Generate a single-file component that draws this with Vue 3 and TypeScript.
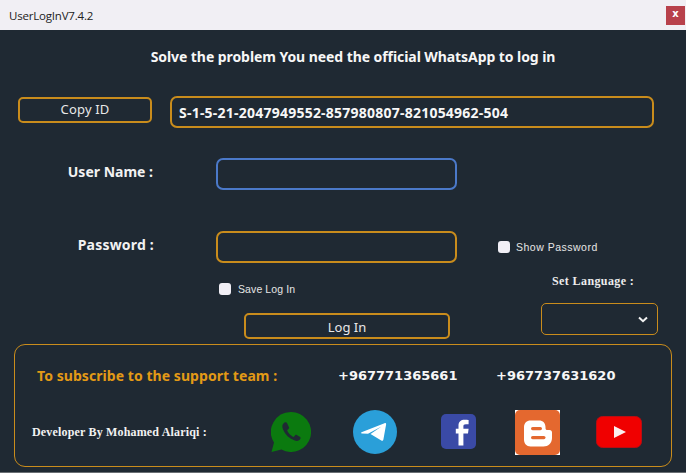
<script setup lang="ts">
import { ref } from 'vue'

const userName = ref('')
const password = ref('')
const showPassword = ref(false)
const saveLogIn = ref(false)
const machineId = 'S-1-5-21-2047949552-857980807-821054962-504'
</script>

<template>
  <div class="window">
    <header class="titlebar">
      <span class="title">UserLogInV7.4.2</span>
      <button class="close">x</button>
    </header>

    <h1 class="heading">Solve the problem You need the official WhatsApp to log in</h1>

    <div class="id-row">
      <button class="copy-btn">Copy ID</button>
      <div class="id-box">{{ machineId }}</div>
    </div>

    <div class="field-row user-row">
      <label class="field-label">User Name :</label>
      <input v-model="userName" class="field focus" type="text" />
    </div>

    <div class="field-row pass-row">
      <label class="field-label">Password :</label>
      <input v-model="password" class="field" :type="showPassword ? 'text' : 'password'" />
      <label class="check show-check">
        <input v-model="showPassword" type="checkbox" />
        <span>Show Password</span>
      </label>
    </div>

    <div class="lower-row">
      <div class="lower-left">
        <label class="check save-check">
          <input v-model="saveLogIn" type="checkbox" />
          <span>Save Log In</span>
        </label>
        <button class="login-btn">Log In</button>
      </div>
      <div class="lower-right">
        <div class="lang-label">Set Language :</div>
        <div class="lang-select">
          <svg class="chevron" width="10" height="7" viewBox="0 0 10 7">
            <path d="M1 1.5 L5 5.2 L9 1.5" fill="none" stroke="#f2f2f2" stroke-width="2" />
          </svg>
        </div>
      </div>
    </div>

    <footer class="support">
      <div class="support-top">
        <span class="subscribe">To subscribe to the support team :</span>
        <span class="phone first">+967771365661</span>
        <span class="phone second">+967737631620</span>
      </div>
      <div class="support-bottom">
        <span class="developer">Developer By Mohamed Alariqi :</span>

        <svg class="ic whatsapp" width="40" height="40" viewBox="0 0 40 40">
          <path d="M20 0 A20 20 0 1 1 10.4 37.5 L0.5 40 L3 30.6 A20 20 0 0 1 20 0 Z" fill="#0b7a0f" />
          <path transform="translate(2.5 3.4) scale(0.86)" d="M12.5 8.5 C10 10 9.6 13 11.2 16.6 C13.8 22.4 18 26.6 24 29 C27.4 30.3 30.3 29.6 31.4 27 C31.7 26.2 31.6 25.6 31 25.2 L27 22.8 C26.3 22.4 25.7 22.5 25.2 23.1 L24 24.6 C23.6 25 23.1 25.1 22.6 24.8 C19.8 23.2 17.6 21 16.2 18.2 C15.9 17.6 16 17.2 16.4 16.8 L17.7 15.5 C18.2 15 18.3 14.4 18 13.8 L16 9.3 C15.5 8.2 14 7.7 12.5 8.5 Z" fill="#1f2a33" />
        </svg>

        <svg class="ic telegram" width="44" height="44" viewBox="0 0 44 44">
          <circle cx="22" cy="22" r="22" fill="#2a9fd9" />
          <path d="M8.5 22.3 L31.5 13.2 C32.6 12.8 33.3 13.4 33.1 14.5 L30.4 29.6 C30.1 30.8 29.2 31.2 28.3 30.5 L17.5 24 L28.5 16.4 L15 23.8 L8.7 23.4 C8 23.3 8 22.6 8.5 22.3 Z" fill="#fff" />
        </svg>

        <svg class="ic facebook" width="35" height="35" viewBox="0 0 35 35">
          <rect width="35" height="35" rx="5" fill="#3a4aa6" />
          <path d="M17.5 31.5 V19.5 H14.8 V14.8 H17.5 V11.6 C17.5 7.8 20 5.8 23.6 5.8 C25.4 5.8 27 5.9 27.6 6 V10.2 H25 C22.8 10.2 22.4 11 22.4 12.2 V14.8 H27.6 L27 19.5 H22.4 V31.5 Z" fill="#fff" />
        </svg>

        <svg class="ic blogger" width="45" height="45" viewBox="0 0 45 45">
          <rect width="45" height="45" fill="#fff" />
          <rect width="45" height="45" rx="5" fill="#e4682f" />
          <path d="M15.5 10.5 H24 C28 10.5 30.5 13.2 30.5 17 V18 C30.5 19.4 31.2 20 32.4 20 H34.5 C36.2 20 37 21 37 22.5 V28 C37 33 33.2 36.5 28.5 36.5 H15.5 C11.5 36.5 9 33.5 9 29.5 V17 C9 13.2 11.8 10.5 15.5 10.5 Z" fill="#fff" />
          <rect x="16" y="17" width="11" height="3.2" rx="1.6" fill="#e4682f" />
          <rect x="16" y="26" width="14.5" height="3.2" rx="1.6" fill="#e4682f" />
        </svg>

        <svg class="ic youtube" width="46" height="32" viewBox="0 0 46 32">
          <rect x="0.5" y="0.5" width="45" height="31" rx="6" fill="#f00000" stroke="#b90d12" />
          <path d="M18 10 L30 16 L18 22 Z" fill="#fbeeee" />
        </svg>
      </div>
    </footer>
  </div>
</template>

<style scoped>
.window {
  width: 686px;
  height: 473px;
  overflow: hidden;
  background: #1f2933;
  color: #f4f4f4;
  font-family: "Noto Sans", sans-serif;
  border-bottom: 1px solid #6a6f74;
  box-sizing: border-box;
}

.titlebar {
  height: 30px;
  background: #f1eff4;
  display: flex;
  align-items: center;
  justify-content: space-between;
  padding: 0 1px 0 9px;
  box-sizing: border-box;
}

.title {
  font-family: "Open Sans", sans-serif;
  font-size: 11.5px;
  letter-spacing: -0.2px;
  color: #222;
}

.close {
  width: 19px;
  height: 19px;
  border: none;
  padding: 0 0 2px;
  background: #b8414b;
  color: #fff;
  font-family: "DejaVu Sans", sans-serif;
  font-size: 10px;
  font-weight: 700;
  line-height: 1;
}

.heading {
  height: 54px;
  margin: 0;
  padding: 0 0 2px 20px;
  box-sizing: border-box;
  display: flex;
  align-items: center;
  justify-content: center;
  font-size: 14px;
  font-weight: 700;
  letter-spacing: -0.07px;
  color: #f7f7f7;
}

.id-row {
  display: flex;
  gap: 18px;
  margin-top: 12px;
  padding-left: 18px;
}

.copy-btn {
  width: 134px;
  height: 26px;
  margin-top: 1px;
  background: transparent;
  border: 2px solid #c98c1c;
  border-radius: 5px;
  color: #e8e8e8;
  font-family: "Noto Sans", sans-serif;
  font-size: 13px;
  letter-spacing: 0.15px;
  padding: 0 0 3px;
}

.id-box {
  width: 484px;
  height: 32px;
  box-sizing: border-box;
  border: 2px solid #c98c1c;
  border-radius: 7px;
  padding-left: 7px;
  display: flex;
  align-items: center;
  font-size: 14px;
  font-weight: 700;
  letter-spacing: 0.23px;
  color: #f7f7f7;
}

.field-row {
  display: flex;
  align-items: center;
  height: 32px;
}

.user-row {
  margin-top: 30px;
}

.pass-row {
  margin-top: 41px;
}

.field-label {
  width: 154px;
  margin-right: 62px;
  text-align: right;
  font-size: 14px;
  font-weight: 700;
  color: #f2f2f2;
}

.user-row .field-label {
  width: 153px;
  margin-right: 63px;
  padding-bottom: 5px;
}

.pass-row .field-label {
  padding-bottom: 6px;
  letter-spacing: 0.2px;
}

.field {
  width: 241px;
  height: 32px;
  box-sizing: border-box;
  background: transparent;
  border: 2px solid #c98c1c;
  border-radius: 7px;
  outline: none;
  color: #f4f4f4;
}

.field.focus {
  border-color: #4b79c9;
}

.check {
  display: flex;
  align-items: center;
  font-family: "Liberation Sans", sans-serif;
  font-size: 10.5px;
  color: #e6e6e6;
}

.check input {
  appearance: none;
  margin: 0;
  background: #f1eff6;
  border: none;
  border-radius: 3px;
}

.show-check {
  margin-left: 41px;
  gap: 6px;
  margin-bottom: 1px;
  letter-spacing: 0.5px;
}

.show-check input {
  width: 12px;
  height: 12px;
}

.save-check {
  gap: 7px;
  height: 12px;
  letter-spacing: 0.1px;
}

.save-check input {
  width: 12px;
  height: 12px;
}

.lower-row {
  display: flex;
  height: 81px;
}

.lower-left {
  width: 541px;
  box-sizing: border-box;
  padding: 20px 0 0 219px;
}

.login-btn {
  display: block;
  width: 206px;
  height: 26px;
  margin: 18px 0 0 25px;
  background: transparent;
  border: 2px solid #c98c1c;
  border-radius: 5px;
  color: #e8e8e8;
  font-family: "Noto Sans", sans-serif;
  font-size: 13px;
  padding: 1px 0 0;
}

.lang-label {
  height: 14px;
  margin-top: 11px;
  padding-left: 11px;
  font-family: "Liberation Serif", serif;
  font-size: 12px;
  font-weight: 700;
  letter-spacing: 0.4px;
  line-height: 14px;
  color: #ededed;
}

.lang-select {
  position: relative;
  width: 117px;
  height: 32px;
  margin-top: 15px;
  box-sizing: border-box;
  border: 1px solid #c98c1c;
  border-radius: 5px;
}

.chevron {
  position: absolute;
  right: 9px;
  top: 12px;
}

.support {
  width: 658px;
  height: 123px;
  margin-left: 14px;
  box-sizing: border-box;
  border: 1px solid #c98c1c;
  border-radius: 11px;
}

.support-top {
  display: flex;
  align-items: center;
  height: 30px;
  margin-top: 15px;
  padding-left: 22px;
  font-size: 14px;
  font-weight: 700;
}

.subscribe {
  width: 301px;
  letter-spacing: 0.06px;
  color: #e39a16;
}

.phone {
  width: 158px;
  font-family: "DejaVu Sans", sans-serif;
  font-size: 13px;
  color: #f7f7f7;
}

.support-bottom {
  display: flex;
  align-items: center;
  height: 46px;
  margin-top: 19px;
  padding-left: 17px;
}

.developer {
  width: 239px;
  font-family: "Liberation Serif", serif;
  font-size: 12px;
  font-weight: 700;
  letter-spacing: 0.17px;
  color: #f2f2f2;
}

.ic {
  flex: none;
}

.telegram {
  margin-left: 42px;
}

.facebook {
  margin-left: 44px;
  margin-bottom: 2px;
}

.blogger {
  margin-left: 39px;
}

.youtube {
  margin-left: 36px;
}
</style>

<style>
html, body {
  margin: 0;
  background: #1f2933;
}
</style>
